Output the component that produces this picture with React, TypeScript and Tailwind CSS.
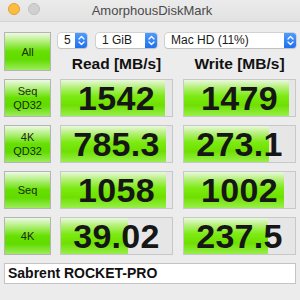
import React from 'react';

const rows = [
  { label: ['Seq', 'QD32'], read: '1542', readFill: 94, write: '1479', writeFill: 95 },
  { label: ['4K', 'QD32'], read: '785.3', readFill: 95, write: '273.1', writeFill: 77 },
  { label: ['Seq'], read: '1058', readFill: 95, write: '1002', writeFill: 90 },
  { label: ['4K'], read: '39.02', readFill: 60, write: '237.5', writeFill: 76 },
];

const Stepper = () => (
  <div className="w-[12px] h-full rounded-r-[3px] bg-[linear-gradient(to_bottom,#4f9cfb,#1f6fef)] flex items-center justify-center">
    <svg width="7" height="11" viewBox="0 0 7 11" fill="none" stroke="white" strokeWidth="1.3" strokeLinecap="round" strokeLinejoin="round">
      <path d="M1 4 L3.5 1.5 L6 4" />
      <path d="M1 7 L3.5 9.5 L6 7" />
    </svg>
  </div>
);

const Select = ({ text, className }: { text: string; className: string }) => (
  <div className={`h-[15px] flex items-stretch bg-white rounded-[3px] shadow-[0_0_0_0.5px_#b8b8b8,0_1px_1px_rgba(0,0,0,0.15)] ${className}`}>
    <span className="flex-1 pl-[6px] text-[12px] leading-[15px] text-[#1a1a1a]">{text}</span>
    <Stepper />
  </div>
);

const LabelButton = ({ lines }: { lines: string[] }) => (
  <div className="w-[47px] h-full border border-[#b4b4b4] bg-[linear-gradient(to_bottom,#eef9e6_0%,#b4f07f_22%,#66e000_50%,#62dc00_72%,#9cec5c_100%)] flex flex-col items-center justify-center text-[11px] leading-[14px] text-[#1c2a10]">
    {lines.map((l, i) => (
      <span key={i}>{l}</span>
    ))}
  </div>
);

const ValueBox = ({ value, fill }: { value: string; fill: number }) => (
  <div className="relative w-[113px] h-full border border-[#c8c8c8] bg-[#e6e6e6] flex items-center justify-center overflow-hidden">
    <div
      className="absolute left-0 top-0 bottom-0 bg-[linear-gradient(to_bottom,#eaf8df_0%,#b6f07a_20%,#7ceb12_45%,#6ee000_70%,#98ee4c_100%)]"
      style={{ width: `${fill}%` }}
    />
    <span className="relative text-[34px] font-bold leading-none text-[#161616] tracking-[0.3px]">{value}</span>
  </div>
);

export default function App() {
  return (
    <div className="w-[300px] h-[300px] bg-[#ececec] flex flex-col overflow-hidden font-['Liberation_Sans',Arial,sans-serif]">
      {/* title bar */}
      <div className="relative h-[22px] flex items-center justify-center bg-[linear-gradient(to_bottom,#ebebeb,#e2e2e2)] border-b border-[#d4d4d4]">
        <div className="absolute left-[-12px] top-[3px] flex gap-[8px]">
          <div className="w-[12px] h-[12px] rounded-full bg-[#fc605c] border border-[#de4a45]" />
          <div className="w-[12px] h-[12px] rounded-full bg-[#fdbc40] border border-[#dea136]" />
          <div className="w-[12px] h-[12px] rounded-full bg-[#d0d0d0] border border-[#c0c0c0]" />
        </div>
        <span className="text-[13px] text-[#4a4a4a] pl-[4px]">AmorphousDiskMark</span>
      </div>

      <div className="flex flex-col px-[4px] pt-[10px]">
        {/* top row */}
        <div className="flex h-[39px]">
          <LabelButton lines={['All']} />
          <div className="flex flex-col ml-[7px] flex-1">
            <div className="flex mt-[1px]">
              <Select text="5" className="w-[29px]" />
              <Select text="1 GiB" className="w-[61px] ml-[9px]" />
              <Select text="Mac HD (11%)" className="w-[131px] ml-[8px]" />
            </div>
            <div className="flex mt-[8px] ml-[2px]">
              <span className="w-[113px] text-center text-[15.5px] font-bold text-[#111] leading-[16px]">Read [MB/s]</span>
              <span className="w-[113px] ml-[10px] text-center text-[15.5px] font-bold text-[#111] leading-[16px]">Write [MB/s]</span>
            </div>
          </div>
        </div>

        {/* results */}
        <div className="flex flex-col gap-[8px] mt-[8px]">
          {rows.map((r, i) => (
            <div key={i} className="flex h-[38px]">
              <LabelButton lines={r.label} />
              <div className="ml-[9px] h-full">
                <ValueBox value={r.read} fill={r.readFill} />
              </div>
              <div className="ml-[10px] h-full">
                <ValueBox value={r.write} fill={r.writeFill} />
              </div>
            </div>
          ))}
        </div>

        {/* drive name */}
        <div className="mt-[8px] h-[21px] bg-white border border-[#c4c4c4] flex items-center pl-[3px]">
          <span className="text-[14px] font-bold text-[#111]">Sabrent ROCKET-PRO</span>
        </div>
      </div>
    </div>
  );
}
